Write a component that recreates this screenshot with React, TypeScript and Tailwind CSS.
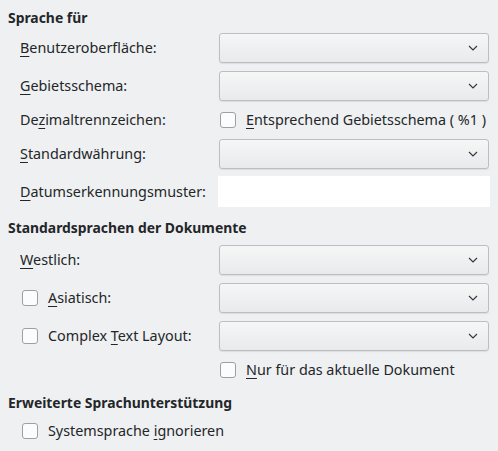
import React from "react";

const Chevron: React.FC = () => (
  <svg width="10" height="6" viewBox="0 0 10 6" className="absolute right-[10px] top-1/2 -translate-y-1/2">
    <polyline points="1,1 5,5 9,1" fill="none" stroke="#31363b" strokeWidth="1.1" />
  </svg>
);

const Combo: React.FC = () => (
  <div className="relative w-[270px] h-[30px] rounded-[3px] border border-[#bcbebf] bg-gradient-to-b from-[#f5f6f6] to-[#e9eaeb] shadow-[0_1px_1px_rgba(0,0,0,0.08)]">
    <Chevron />
  </div>
);

const Check: React.FC = () => (
  <span className="inline-block w-[16px] h-[16px] rounded-[3px] border border-[#9da0a3] bg-[#fcfcfc] shrink-0" />
);

const U: React.FC<{ children: React.ReactNode }> = ({ children }) => (
  <span className="underline underline-offset-[3px] decoration-1">{children}</span>
);

const Row: React.FC<{ label: React.ReactNode; children: React.ReactNode; className?: string }> = ({
  label,
  children,
  className = "",
}) => (
  <div className={`flex items-center ${className}`}>
    <div className="w-[219px] pl-[20px] flex items-center">{label}</div>
    {children}
  </div>
);

const Heading: React.FC<{ children: React.ReactNode; className?: string }> = ({ children, className = "" }) => (
  <div className={`h-[20px] flex items-center pl-[8px] font-bold text-[13.9px] ${className}`}>{children}</div>
);

const App: React.FC = () => {
  return (
    <div
      className="w-[498px] h-[451px] bg-[#eff0f1] text-[#232629] text-[14.35px] pt-[8px] flex flex-col overflow-hidden"
      style={{ fontFamily: '"Noto Sans", sans-serif' }}
    >
      <Heading>Sprache für</Heading>

      <Row className="mt-[5px]" label={<span><U>B</U>enutzeroberfläche:</span>}>
        <Combo />
      </Row>
      <Row className="mt-[8px]" label={<span><U>G</U>ebietsschema:</span>}>
        <Combo />
      </Row>
      <Row className="mt-[4px] h-[30px]" label={<span>De<U>z</U>imaltrennzeichen:</span>}>
        <div className="flex items-center pl-[1px]">
          <Check />
          <span className="ml-[10px]"><U>E</U>ntsprechend Gebietsschema ( %1 )</span>
        </div>
      </Row>
      <Row className="mt-[4px]" label={<span><U>S</U>tandardwährung:</span>}>
        <Combo />
      </Row>
      <Row className="mt-[7px]" label={<span><U>D</U>atumserkennungsmuster:</span>}>
        <div className="-ml-[1px] w-[272px] h-[31px] bg-white" />
      </Row>

      <Heading className="mt-[11px]">Standardsprachen der Dokumente</Heading>

      <Row className="mt-[7px]" label={<span><U>W</U>estlich:</span>}>
        <Combo />
      </Row>
      <div className="flex items-center mt-[8px]">
        <div className="w-[219px] pl-[22px] flex items-center">
          <Check />
          <span className="ml-[10px]"><U>A</U>siatisch:</span>
        </div>
        <Combo />
      </div>
      <div className="flex items-center mt-[8px]">
        <div className="w-[219px] pl-[22px] flex items-center">
          <Check />
          <span className="ml-[10px]">Complex <U>T</U>ext Layout:</span>
        </div>
        <Combo />
      </div>
      <div className="flex items-center mt-[4px] h-[30px] pl-[220px]">
        <Check />
        <span className="ml-[10px]"><U>N</U>ur für das aktuelle Dokument</span>
      </div>

      <Heading className="mt-[8px]">Erweiterte Sprachunterstützung</Heading>

      <div className="flex items-center mt-[3px] h-[30px] pl-[22px]">
        <Check />
        <span className="ml-[10px]">Systemsprache <U>i</U>gnorieren</span>
      </div>
    </div>
  );
};

export default App;
